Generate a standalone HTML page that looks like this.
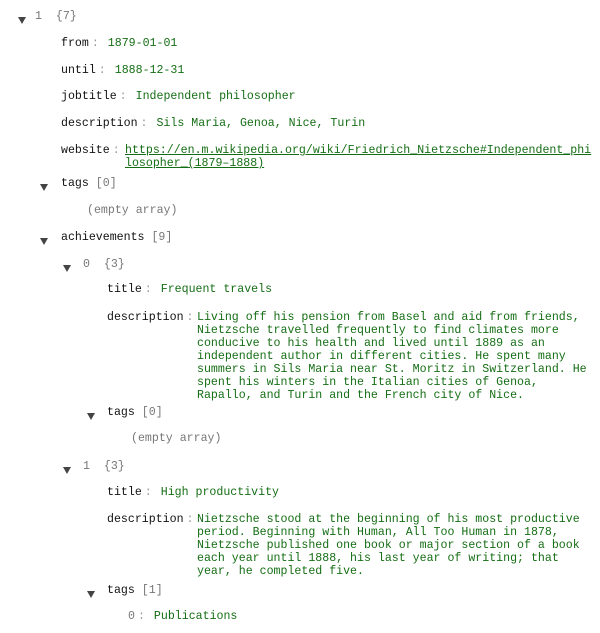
<!DOCTYPE html>
<html><head><style>
body{margin:0;background:#fff;width:600px;height:633px;overflow:hidden;position:relative;font-family:"Liberation Mono",monospace;font-size:11.6px;color:#111}
.r{position:absolute;white-space:pre;line-height:13px}
.t{position:absolute;width:0;height:0;border-left:4px solid transparent;border-right:4px solid transparent;border-top:7px solid #444}
.v{color:#156e15}
.c{color:#999;padding:0 2px 0 3px}
.g{color:#777}
a{color:#156e15;text-decoration:underline}
.w{white-space:normal;word-break:break-all}
</style></head><body>
<div class="t" style="left:18px;top:17px"></div><div class="r" style="left:35px;top:10px"><span class="g">1</span>  <span class="g">{7}</span></div>
<div class="r" style="left:61px;top:37px">from<span class="c">:</span> <span class="v">1879-01-01</span></div>
<div class="r" style="left:61px;top:64px">until<span class="c">:</span> <span class="v">1888-12-31</span></div>
<div class="r" style="left:61px;top:90px">jobtitle<span class="c">:</span> <span class="v">Independent philosopher</span></div>
<div class="r" style="left:61px;top:117px">description<span class="c">:</span> <span class="v">Sils Maria, Genoa, Nice, Turin</span></div>
<div class="r" style="left:61px;top:144px">website<span class="c">:</span></div>
<div class="r w" style="left:125px;top:144px;width:470px"><a>https://en.m.wikipedia.org/wiki/Friedrich_Nietzsche#Independent_philosopher_(1879–1888)</a></div>
<div class="t" style="left:40px;top:184px"></div><div class="r" style="left:61px;top:177px">tags <span class="g">[0]</span></div>
<div class="r g" style="left:87px;top:204px">(empty array)</div>
<div class="t" style="left:40px;top:238px"></div><div class="r" style="left:61px;top:231px">achievements <span class="g">[9]</span></div>
<div class="t" style="left:63px;top:265px"></div><div class="r g" style="left:83px;top:258px">0  {3}</div>
<div class="r" style="left:107px;top:283px">title<span class="c">:</span> <span class="v">Frequent travels</span></div>
<div class="r" style="left:107px;top:311px">description<span class="c">:</span></div>
<div class="r v" style="left:197px;top:311px">Living off his pension from Basel and aid from friends,
Nietzsche travelled frequently to find climates more
conducive to his health and lived until 1889 as an
independent author in different cities. He spent many
summers in Sils Maria near St. Moritz in Switzerland. He
spent his winters in the Italian cities of Genoa,
Rapallo, and Turin and the French city of Nice.</div>
<div class="t" style="left:87px;top:413px"></div><div class="r" style="left:107px;top:406px">tags <span class="g">[0]</span></div>
<div class="r g" style="left:131px;top:432px">(empty array)</div>
<div class="t" style="left:63px;top:467px"></div><div class="r g" style="left:83px;top:460px">1  {3}</div>
<div class="r" style="left:107px;top:486px">title<span class="c">:</span> <span class="v">High productivity</span></div>
<div class="r" style="left:107px;top:513px">description<span class="c">:</span></div>
<div class="r v" style="left:197px;top:513px">Nietzsche stood at the beginning of his most productive
period. Beginning with Human, All Too Human in 1878,
Nietzsche published one book or major section of a book
each year until 1888, his last year of writing; that
year, he completed five.</div>
<div class="t" style="left:87px;top:591px"></div><div class="r" style="left:107px;top:584px">tags <span class="g">[1]</span></div>
<div class="r" style="left:128px;top:610px"><span class="g">0</span><span class="c">:</span> <span class="v">Publications</span></div>
</body></html>
